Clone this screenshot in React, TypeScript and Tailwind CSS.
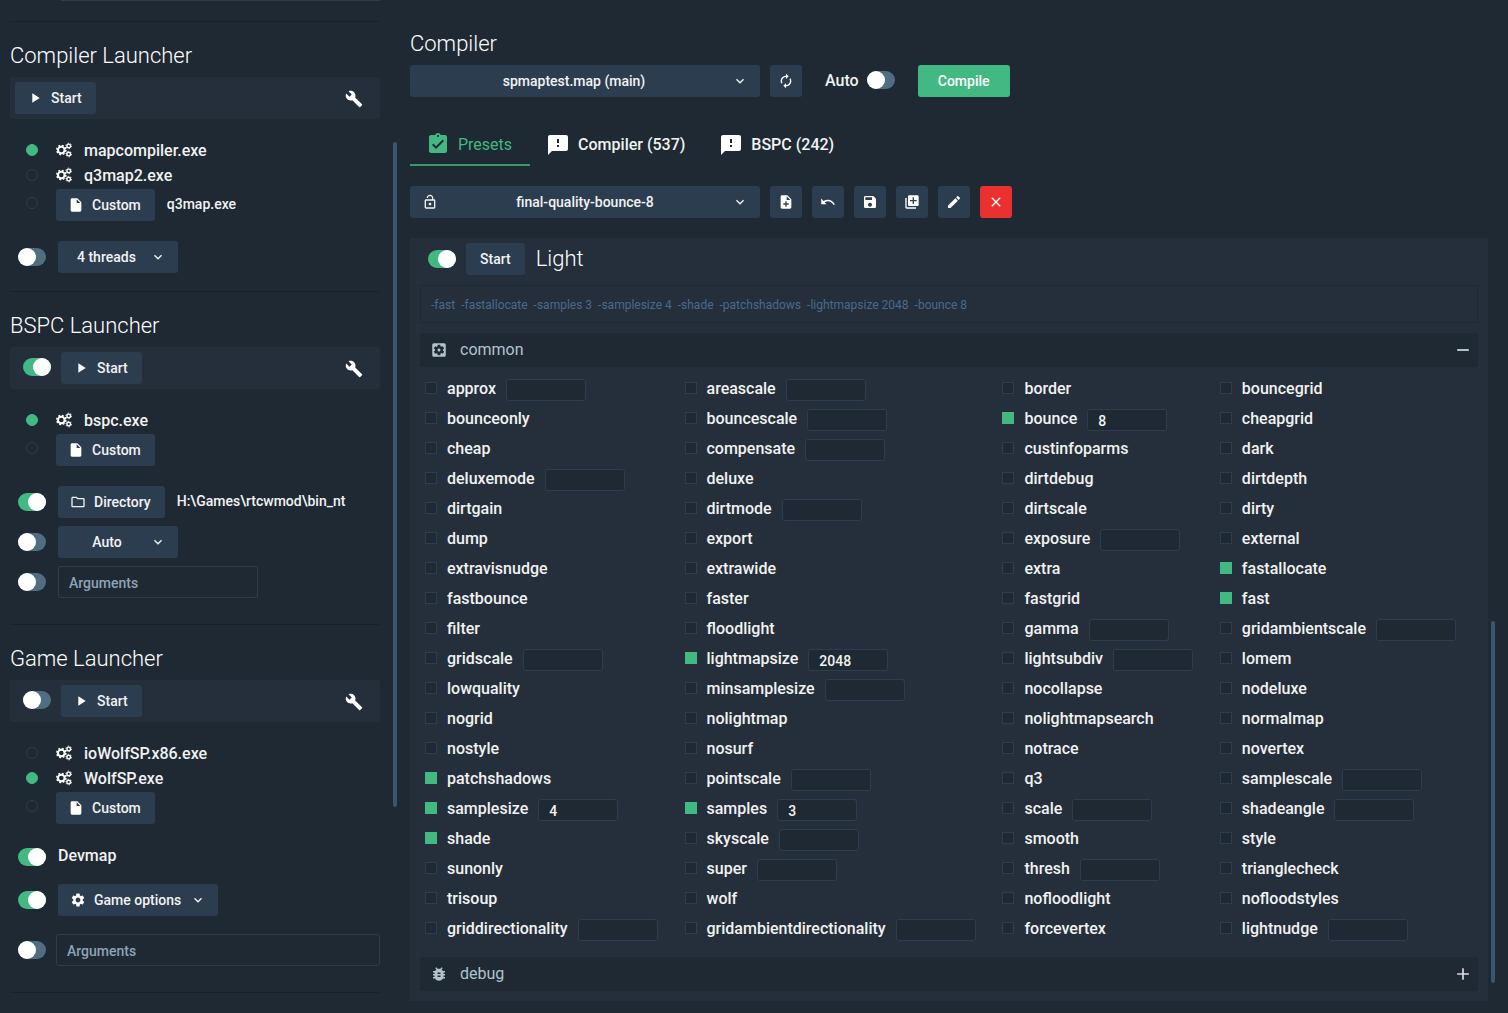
import React from "react";
import {
  MdPlayArrow, MdBuild, MdInsertDriveFile, MdOutlineFolder, MdSettings, MdAutorenew, MdAssignmentTurnedIn,
  MdFeedback, MdLockOpen, MdNoteAdd, MdSave, MdLibraryAdd, MdEdit, MdClose, MdSettingsApplications,
  MdBugReport, MdExpandMore, MdAdd, MdRemove,
} from "react-icons/md";

const BTN = "flex h-8 items-center rounded-[3px] bg-[#2d3d50] text-sm font-medium text-[#f2f2f2]";

function Switch({ on, label }: { on?: boolean; label: string }) {
  return (
    <label className="flex h-[18px] w-7 shrink-0 cursor-pointer rounded-full bg-[#4f6f80] has-checked:justify-end has-checked:bg-[#42b983]">
      <input type="checkbox" role="switch" aria-label={label} defaultChecked={on} className="sr-only" />
      <span className="size-[18px] rounded-full bg-white" />
    </label>
  );
}

function Cogs() {
  const small = (cx: number, cy: number) => (
    <g key={cy}>
      <circle cx={cx} cy={cy} r="1.8" fill="none" stroke="currentColor" strokeWidth="1.4" />
      <circle cx={cx} cy={cy} r="2.8" fill="none" stroke="currentColor" strokeWidth="1" strokeDasharray="1.300 1.632" />
    </g>
  );
  return (
    <svg viewBox="0 0 16 16" className="size-4 shrink-0" aria-hidden="true">
      <circle cx="5.300" cy="8" r="3.300" fill="none" stroke="currentColor" strokeWidth="2" />
      <circle cx="5.300" cy="8" r="4.600" fill="none" stroke="currentColor" strokeWidth="1.500" strokeDasharray="1.900 1.713" />
      {small(12.7, 3.9)}
      {small(12.7, 12.1)}
    </svg>
  );
}

function Radio({ name, on, label }: { name: string; on?: boolean; label: string }) {
  return (
    <input
      type="radio"
      name={name}
      aria-label={label}
      defaultChecked={on}
      className="size-3 shrink-0 appearance-none rounded-full border border-[#2d3d50] checked:border-[#42b983] checked:bg-[#42b983]"
    />
  );
}

function ExeRow({ group, name, on }: { group: string; name: string; on?: boolean }) {
  return (
    <label className="flex h-[25px] items-center pl-4">
      <span className="flex items-center pb-px">
        <Radio name={group} on={on} label={name} />
        <span className="ml-[18px] text-white"><Cogs /></span>
      </span>
      <span className="ml-3">{name}</span>
    </label>
  );
}

function CustomRow({ group, file }: { group: string; file?: string }) {
  return (
    <div className="flex items-center pt-px pl-4">
      <span className="flex pb-1"><Radio name={group} label="Custom executable" /></span>
      <button className={`${BTN} ml-[18px] pr-3.5 pl-3`}>
        <MdInsertDriveFile className="mr-2 size-4 text-white" />
        Custom
      </button>
      {file && <span className="ml-3 pb-0.5 text-sm font-medium">{file}</span>}
    </div>
  );
}

function LaunchBar({ toggle, on, name }: { toggle?: boolean; on?: boolean; name: string }) {
  return (
    <div className="flex h-[42px] items-center rounded-[3px] bg-[#242f3b] pr-4 pl-[5px]">
      {toggle && <div className="mr-2.5 ml-2 pb-0.5"><Switch on={on} label={name} /></div>}
      <button className={`${BTN} pr-3.5 pl-3`}>
        <MdPlayArrow className="mr-2 size-4 text-white" />
        Start
      </button>
      <button className="ml-auto pt-0.5 text-white" aria-label={`${name} settings`}><MdBuild className="size-5 p-px" /></button>
    </div>
  );
}

function Section({ title, children }: { title: string; children: React.ReactNode }) {
  return (
    <section className="border-t border-[#18222a] pt-[18px]">
      <h2 className="mb-[5px] text-[22px] leading-8 font-light text-white">{title}</h2>
      {children}
    </section>
  );
}

function Dropdown({ children, className }: { children: React.ReactNode; className: string }) {
  return (
    <button aria-haspopup="listbox" className={`${BTN} ${className}`}>
      {children}
      <MdExpandMore className="size-4 shrink-0" />
    </button>
  );
}

function Sidebar() {
  const field = "h-8 rounded-[3px] border border-[#2d3d50] bg-transparent px-2.5 pt-0.5 text-sm placeholder:text-[#8fa3b8]";
  return (
    <aside className="flex w-[400px] shrink-0 gap-[13px] pl-2.5">
      <div className="flex w-[370px] flex-col">
        <div className="mb-5 ml-[51px] h-px bg-[#2d3d50]" />
        <Section title="Compiler Launcher">
          <LaunchBar name="Compiler" />
          <div className="mt-[19px]">
            <ExeRow group="compiler" name="mapcompiler.exe" on />
            <ExeRow group="compiler" name="q3map2.exe" />
            <CustomRow group="compiler" file="q3map.exe" />
          </div>
          <div className="mt-5 mb-[18px] flex items-center gap-3 pl-2">
            <Switch label="Limit threads" />
            <Dropdown className="w-[120px] justify-between pr-3 pl-[19px]">4 threads</Dropdown>
          </div>
        </Section>
        <Section title="BSPC Launcher">
          <LaunchBar toggle on name="BSPC" />
          <div className="mt-[19px]">
            <ExeRow group="bspc" name="bspc.exe" on />
            <CustomRow group="bspc" />
          </div>
          <div className="mt-5 mb-[26px] flex flex-col gap-2 pl-2">
            <div className="flex items-center gap-3">
              <Switch on label="Use directory" />
              <button className={`${BTN} pr-3.5 pl-3`}>
                <MdOutlineFolder className="mr-2 size-4" />
                Directory
              </button>
              <span className="pb-0.5 text-sm font-medium">H:\Games\rtcwmod\bin_nt</span>
            </div>
            <div className="flex items-center gap-3">
              <Switch label="Mode" />
              <Dropdown className="w-[120px] pr-3"><span className="grow pl-1.5">Auto</span></Dropdown>
            </div>
            <div className="flex items-center gap-3">
              <Switch label="Use arguments" />
              <input aria-label="BSPC arguments" placeholder="Arguments" className={`${field} w-[200px]`} />
            </div>
          </div>
        </Section>
        <Section title="Game Launcher">
          <LaunchBar toggle name="Game" />
          <div className="mt-[19px]">
            <ExeRow group="game" name="ioWolfSP.x86.exe" />
            <ExeRow group="game" name="WolfSP.exe" on />
            <CustomRow group="game" />
          </div>
          <div className="mt-[21px] flex h-6 items-center gap-3 pl-2">
            <Switch on label="Devmap" />
            <span className="pb-0.5">Devmap</span>
          </div>
          <div className="mt-[15px] flex items-center gap-3 pl-2">
            <Switch on label="Game options" />
            <Dropdown className="w-40 pr-3 pl-3">
              <MdSettings className="mr-2 size-4 text-white" />
              <span className="grow text-left">Game options</span>
            </Dropdown>
          </div>
          <div className="mt-[18px] mb-[26px] flex items-center gap-2.5 pl-2">
            <Switch label="Use game arguments" />
            <input aria-label="Game arguments" placeholder="Arguments" className={`${field} min-w-0 grow`} />
          </div>
        </Section>
        <div className="h-px bg-[#18222a]" />
      </div>
      <div className="mt-[142px] h-[665px] w-1 rounded-full bg-[#3d5470]" />
    </aside>
  );
}

type Opt = { name: string; field?: boolean; value?: string; on?: boolean };
const parse = (list: string): Opt[] =>
  list.split(" ").map((item) => {
    const on = item.startsWith("*");
    const [name, value] = item.replace("*", "").split("=");
    return { name, on, field: value !== undefined, value };
  });

const COLUMNS = [
  parse("approx= bounceonly cheap deluxemode= dirtgain dump extravisnudge fastbounce filter gridscale= lowquality nogrid nostyle *patchshadows *samplesize=4 *shade sunonly trisoup griddirectionality="),
  parse("areascale= bouncescale= compensate= deluxe dirtmode= export extrawide faster floodlight *lightmapsize=2048 minsamplesize= nolightmap nosurf pointscale= *samples=3 skyscale= super= wolf gridambientdirectionality="),
  parse("border *bounce=8 custinfoparms dirtdebug dirtscale exposure= extra fastgrid gamma= lightsubdiv= nocollapse nolightmapsearch notrace q3 scale= smooth thresh= nofloodlight forcevertex"),
  parse("bouncegrid cheapgrid dark dirtdepth dirty external *fastallocate *fast gridambientscale= lomem nodeluxe normalmap novertex samplescale= shadeangle= style trianglecheck nofloodstyles lightnudge="),
];

function Option({ o }: { o: Opt }) {
  return (
    <div className="flex h-[30px] items-start">
      <label className="flex h-6 items-center">
        <input
          type="checkbox"
          defaultChecked={o.on}
          className="mr-2.5 size-3 shrink-0 appearance-none border border-[#2d3d50] bg-[#1e2933] checked:border-[#42b983] checked:bg-[#42b983]"
        />
        <span className="pt-0.5">{o.name}</span>
      </label>
      {o.field && (
        <input
          aria-label={`${o.name} value`}
          defaultValue={o.value}
          className="mt-[3px] ml-2.5 h-[22px] w-20 rounded-[3px] border border-[#2d3d50] bg-[#1e2933] px-2.5 pt-0.5 text-sm font-medium"
        />
      )}
    </div>
  );
}

function GroupBar({ icon, name, end }: { icon: React.ReactNode; name: string; end: React.ReactNode }) {
  return (
    <button className="flex h-[34px] w-full items-center rounded-[3px] bg-[#1e2933] pr-[5px] pl-2.5 text-[#b0c4ce]">
      {icon}
      <span className="ml-3 font-normal">{name}</span>
      <span className="ml-auto text-[#dddddd]">{end}</span>
    </button>
  );
}

function UndoIcon() {
  return (
    <svg viewBox="0 0 16 16" className="size-4" aria-hidden="true">
      <path d="M1.2 4.6v5.6h5.4L4.7 8.3C7.600 6.300 11.300 7 13.600 11l1.300-.6C12.500 5.500 7.500 4.400 3.600 7.100z" fill="currentColor" />
    </svg>
  );
}

function Main() {
  const square = "flex size-8 items-center justify-center rounded-[3px] bg-[#2d3d50] text-white";
  const tab = "flex h-[42px] items-center pl-4 pr-[18px]";
  return (
    <main className="flex min-w-0 grow flex-col pt-7 pl-2.5">
      <h1 className="text-[22px] leading-8 font-light text-white">Compiler</h1>
      <div className="mt-[5px] flex items-center">
        <Dropdown className="w-[350px] pr-3 pl-3"><span className="grow pr-1.5">spmaptest.map (main)</span></Dropdown>
        <button aria-label="Refresh" className={`${square} ml-2.5`}><MdAutorenew className="size-4" /></button>
        <span className="mr-2 ml-[23px]">Auto</span>
        <span className="flex pb-0.5"><Switch label="Auto compile" /></span>
        <button className="ml-[23px] h-8 w-[92px] rounded-[3px] bg-[#42b983] text-sm font-medium text-white">Compile</button>
      </div>
      <div role="tablist" className="mt-[27px] flex">
        <button role="tab" aria-selected="true" className={`${tab} border-b-2 border-[#359a6c] font-normal text-[#42b983]`}>
          <MdAssignmentTurnedIn className="mr-2 size-6" /><span className="pt-0.5">Presets</span>
        </button>
        <button role="tab" className={tab}><MdFeedback className="mr-2 size-6 text-white" />Compiler (537)</button>
        <button role="tab" className={tab}><MdFeedback className="mr-2 size-6 text-white" />BSPC (242)</button>
      </div>
      <div className="mt-5 flex gap-2.5">
        <Dropdown className="w-[350px] pr-3 pl-3">
          <MdLockOpen className="size-4" />
          <span className="grow">final-quality-bounce-8</span>
        </Dropdown>
        <button aria-label="New preset" className={square}><MdNoteAdd className="size-4" /></button>
        <button aria-label="Undo" className={square}><UndoIcon /></button>
        <button aria-label="Save" className={square}><MdSave className="size-4" /></button>
        <button aria-label="Duplicate" className={square}><MdLibraryAdd className="size-4" /></button>
        <button aria-label="Rename" className={square}><MdEdit className="size-4" /></button>
        <button aria-label="Delete" className="flex size-8 items-center justify-center rounded-[3px] bg-[#eb3030] text-white"><MdClose className="size-4" /></button>
      </div>
      <div className="mt-5 flex gap-[3px] pr-[13px]">
        <section className="min-w-0 grow bg-[#242f3b] px-2.5 pt-[5px] pb-2.5">
          <div className="flex items-center pl-2">
            <Switch on label="Light stage" />
            <button className={`${BTN} ml-2.5 px-3.5`}>Start</button>
            <h2 className="ml-[11px] text-[22px] leading-8 font-light text-white">Light</h2>
          </div>
          <p className="mt-2.5 flex h-[38px] items-center gap-1.5 border border-[#1e2933] px-2.5 pt-0.5 text-xs font-normal text-[#4a6a8c]">
            {["-fast", "-fastallocate", "-samples 3", "-samplesize 4", "-shade", "-patchshadows", "-lightmapsize 2048", "-bounce 8"].map((a) => <span key={a}>{a}</span>)}
          </p>
          <div className="mt-2.5">
            <GroupBar icon={<MdSettingsApplications className="size-[18px]" />} name="common" end={<MdRemove className="size-5" />} />
          </div>
          <div className="mt-[9px] flex justify-between pr-[22px] pl-[5px]">
            {COLUMNS.map((col, i) => (
              <div key={i} className="flex flex-col">{col.map((o) => <Option key={o.name} o={o} />)}</div>
            ))}
          </div>
          <div className="mt-[11px]">
            <GroupBar icon={<MdBugReport className="size-[18px]" />} name="debug" end={<MdAdd className="size-5" />} />
          </div>
        </section>
        <div className="mt-[383px] h-[362px] w-1 shrink-0 rounded-full bg-[#3d5470]" />
      </div>
    </main>
  );
}

export default function App() {
  return (
    <div className="flex min-h-screen bg-[#1e2933] font-[Roboto,sans-serif] text-base font-medium text-[#f2f2f2]">
      <Sidebar />
      <Main />
    </div>
  );
}
